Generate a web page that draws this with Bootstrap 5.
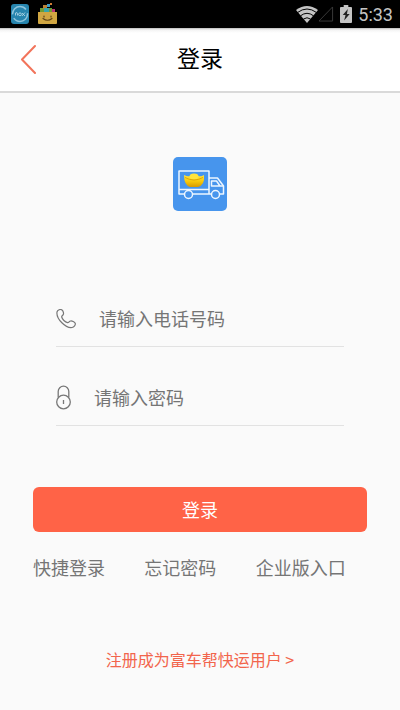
<!DOCTYPE html>
<html lang="zh-CN">
<head>
<meta charset="utf-8">
<meta name="viewport" content="width=device-width, initial-scale=1">
<title>登录</title>
<link href="https://cdn.jsdelivr.net/npm/bootstrap@5.3.0/dist/css/bootstrap.min.css" rel="stylesheet">
<style>
  body { font-family: Roboto, "Noto Sans CJK SC", sans-serif; background: #fafafa; color: #757575; font-size: 18px; line-height: 24px; }
  svg { display: block; flex: none; }
  .status-strip { height: 28px; background: #000; color: #c4c4c4; padding: 0 7px 0 10px; }
  .status-icons { gap: 6px; }
  .clock { font-size: 18px; line-height: 24px; padding-top: 2px; }
  .title-bar { height: 65px; background: linear-gradient(#bbb, #f4f4f4 2px, #fff 5px); border-bottom: 2px solid #d9d9d9; }
  .bar-side { width: 55px; }
  .title-bar h1 { font-size: 23px; line-height: 32px; font-weight: 400; color: #000; }
  .back-btn { padding: 0 0 2px 19px; }
  .app-logo { padding-top: 64px; margin-bottom: 81px; }
  .fields { margin: 0 56px 61px; }
  .field-row { height: 55px; border-bottom: 1px solid #e2e2e2; }
  .field-row + .field-row { margin-top: 24px; }
  .field-row input { font-size: 18px; line-height: 24px; color: #757575; box-shadow: none; }
  .field-row input.form-control { padding: 2px 0 0; }
  .field-row input::placeholder { color: #757575; opacity: 1; }
  .phone-gap { gap: 23px; }
  .lock-gap { gap: 22px; }
  .actions { margin: 0 33px; }
  .login-btn, .login-btn:hover { background: #ff6347; color: #fff; border: 0; border-radius: 6px; height: 45px; padding: 2px 0 0; font-size: 18px; line-height: 24px; }
  .quick-links { margin-top: 25px; }
  .quick-links a { color: #757575; }
  .register { margin-top: 66px; font-size: 16px; font-family: "Noto Sans CJK SC", sans-serif; }
  .register a { color: #f2654c; }
</style>
</head>
<body>
<div class="status-strip d-flex align-items-center">
  <svg width="20" height="20" viewBox="0 0 20 20" aria-hidden="true">
    <rect x="1" width="18" height="20" rx="3" fill="#2785ae"/>
    <circle cx="10" cy="10" r="7.5" fill="none" stroke="#8fc4dc" stroke-width="1.500" stroke-dasharray="19 4"/>
    <g fill="none" stroke="#b9dce9" stroke-width=".8"><path d="M5.500 11.500V9q2-1 2 .5v2M12 9l3 3M15 8.500L12 12"/><circle cx="10" cy="10.300" r="1.400"/></g>
  </svg>
  <svg class="ms-2" width="20" height="22" viewBox="0 0 20 22" aria-hidden="true">
    <path d="M2 5h4v5H2z" fill="#6d9c35"/><path d="M5 2h4v4H5z" fill="#b98031"/><path d="M6 5h5v5H6z" fill="#35a5ac"/><path d="M11 5h3v5h-3z" fill="#6d9c35"/><path d="M9 1h3v3H9z" fill="#3d9ac6"/><path d="M14 6h3v4h-3z" fill="#b93475"/><path d="M12 0h2v2h-2z" fill="#cf7c35"/>
    <path d="M0 9h19v11q0 1-1 1H1q-1 0-1-1z" fill="#d0a642"/>
    <path d="M6 13v1M13 13v1M5 15.500q4.500 3.500 9 0" fill="none" stroke="#5f4215" stroke-width="1.200" stroke-linecap="round"/>
  </svg>
  <div class="status-icons d-flex align-items-center ms-auto">
    <div class="d-flex">
      <svg width="22" height="18" viewBox="0 0 22 18" aria-hidden="true">
        <path d="M0 5Q11-3 22 5L11 18z" fill="#c4c4c4"/>
        <path d="M1.500 7.500q9.500-7 19 0M4.500 10.800q6.500-5 13 0M7.500 14q3.500-2.500 7 0" fill="none" stroke="#000" stroke-width="1"/>
      </svg>
      <svg width="16" height="18" viewBox="0 0 17 18" aria-hidden="true"><path d="M1 16.500L15.500 1.500v15z" fill="none" stroke="#3c3c3c"/></svg>
    </div>
    <svg width="12" height="18" viewBox="0 0 13 18" preserveAspectRatio="none" aria-hidden="true">
      <path d="M4 0h5v2h3q1 0 1 1v14q0 1-1 1H1q-1 0-1-1V3q0-1 1-1h3z" fill="#c4c4c4"/>
      <path d="M8.500 4L3 10h3l-1.500 5.500L10.500 9h-3z" fill="#222"/>
    </svg>
    <span class="clock">5:33</span>
  </div>
</div>

<header class="title-bar d-flex align-items-center">
  <div class="bar-side">
    <button type="button" class="btn border-0 back-btn" aria-label="返回">
      <svg width="18" height="30" viewBox="0 0 18 30" fill="none" stroke="#f2745b" stroke-width="2" stroke-linecap="round" stroke-linejoin="round"><path d="M16 2L3 15.500 16 29"/></svg>
    </button>
  </div>
  <h1 class="flex-grow-1 text-center m-0">登录</h1>
  <div class="bar-side"></div>
</header>

<main>
  <div class="app-logo d-flex justify-content-center">
    <svg width="54" height="54" viewBox="0 0 54 54" role="img" aria-label="富车帮快运">
      <defs><linearGradient id="gold" x2="0" y2="1"><stop stop-color="#ffe947"/><stop offset=".55" stop-color="#f8ca0c"/><stop offset="1" stop-color="#d89a00"/></linearGradient></defs>
      <rect width="54" height="54" rx="5" fill="#4795ed"/>
      <g fill="none" stroke="#edf6ff" stroke-width="1.500" stroke-linejoin="round">
        <path d="M11 37H6V14h30v23M20 37h18M6 32.500h30"/>
        <path d="M36 21h8.500l6 8v8H47"/><path d="M38.500 24h5l3.500 5h-8.500zM47 29h3"/>
        <circle cx="15.500" cy="37.500" r="4" fill="#4795ed"/><circle cx="42.500" cy="37.500" r="4" fill="#4795ed"/>
      </g>
      <path d="M11 18q4 2 6 1 4-4 8 0 3 1 6-1 1 10-6 12h-8q-6-2-6-12z" fill="url(#gold)"/>
      <ellipse cx="21" cy="19.500" rx="4.500" ry="3" fill="#ffe33b"/>
      <path d="M12 20.500q9 5 18 0" fill="none" stroke="#d69b00" stroke-width=".8"/>
    </svg>
  </div>

  <form>
    <div class="fields">
      <div class="field-row phone-gap d-flex align-items-center">
        <label for="phone" aria-label="电话号码">
          <svg width="20" height="20" viewBox="0 0 20 20" fill="none" stroke="#777" stroke-width="1.200" stroke-linejoin="round"><path d="M1 3C1.500 1 4.500-.2 6 1c1.200 1 2 3.500 1.200 4.700-.6.900-1.700 1.100-1.500 2.300.5 2.200 3.400 5.100 5.800 5.700 1.400.3 1.600-1.400 3-1.700 1.600-.3 4.200 1 4.700 2.300.6 1.700-1.200 3.800-3.200 4.200C10 19.500 0 10 1 3z"/></svg>
        </label>
        <input type="tel" id="phone" class="form-control border-0 bg-transparent" placeholder="请输入电话号码">
      </div>
      <div class="field-row lock-gap d-flex align-items-center">
        <label for="password" aria-label="密码">
          <svg width="16" height="26" viewBox="0 0 16 26" fill="none" stroke="#777" stroke-width="1.300"><circle cx="7.500" cy="17" r="6.800"/><path d="M2.200 12.500V6.500a5.300 5.300 0 0 1 10.600 0v6M7.500 15v4"/></svg>
        </label>
        <input type="password" id="password" class="form-control border-0 bg-transparent" placeholder="请输入密码">
      </div>
    </div>
    <div class="actions">
      <button type="submit" class="btn login-btn w-100">登录</button>
      <nav class="quick-links row g-0" aria-label="快捷入口">
        <div class="col-4"><a href="#" class="text-decoration-none">快捷登录</a></div>
        <div class="col-4"><a href="#" class="text-decoration-none">忘记密码</a></div>
        <div class="col-4"><a href="#" class="text-decoration-none">企业版入口</a></div>
      </nav>
    </div>
  </form>
  <p class="register text-center mb-0"><a href="#" class="text-decoration-none">注册成为富车帮快运用户 &gt;</a></p>
</main>
<script src="https://cdn.jsdelivr.net/npm/bootstrap@5.3.0/dist/js/bootstrap.bundle.min.js"></script>
</body>
</html>
